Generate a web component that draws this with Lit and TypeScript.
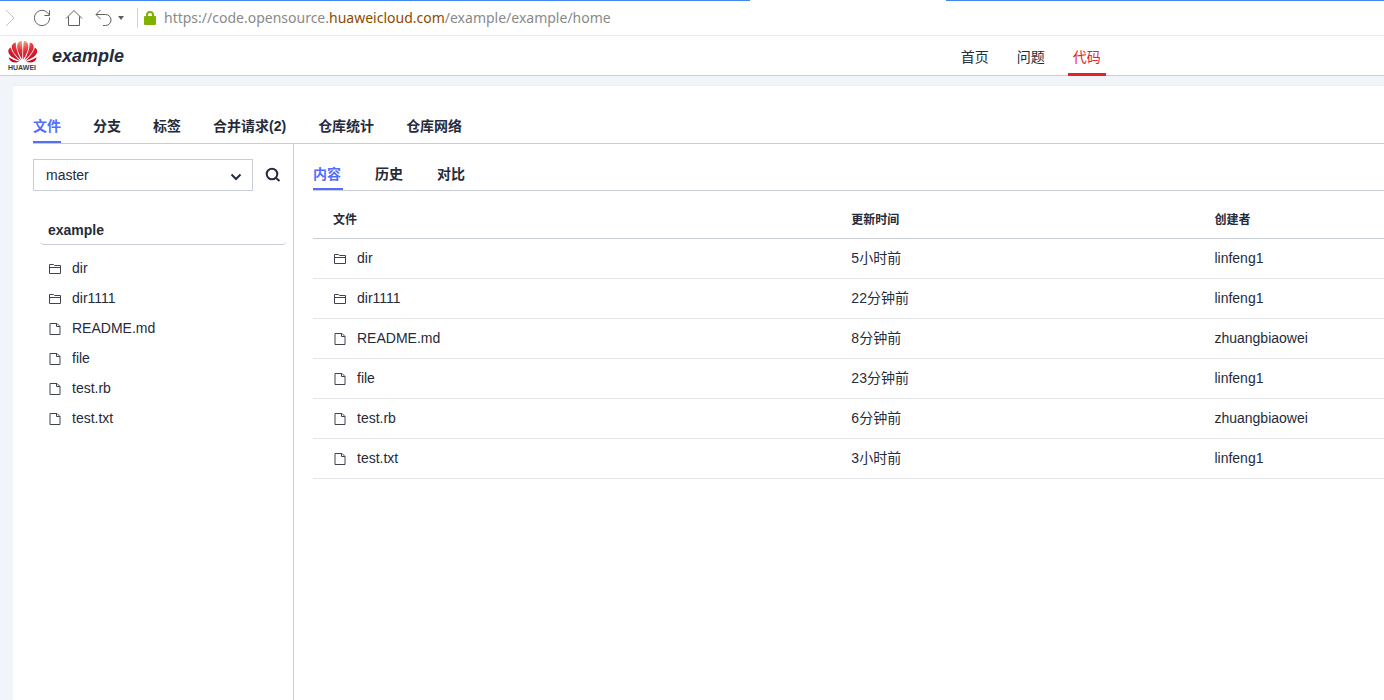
import { LitElement, html, css, svg } from "lit";
import { customElement, state } from "lit/decorators.js";

type Kind = "dir" | "file";
interface Entry {
  name: string;
  kind: Kind;
  updated: string;
  author: string;
}

const ENTRIES: Entry[] = [
  { name: "dir", kind: "dir", updated: "5小时前", author: "linfeng1" },
  { name: "dir1111", kind: "dir", updated: "22分钟前", author: "linfeng1" },
  { name: "README.md", kind: "file", updated: "8分钟前", author: "zhuangbiaowei" },
  { name: "file", kind: "file", updated: "23分钟前", author: "linfeng1" },
  { name: "test.rb", kind: "file", updated: "6分钟前", author: "zhuangbiaowei" },
  { name: "test.txt", kind: "file", updated: "3小时前", author: "linfeng1" },
];

const entryIcon = (kind: Kind) =>
  kind === "dir"
    ? html`<svg class="glyph" width="14" height="14" viewBox="0 0 14 14" aria-hidden="true">
        <path d="M1.5 12.5V3.5H5.5L6.5 4.5H12.5V12.5ZM1.5 6.5H12.5" />
      </svg>`
    : html`<svg class="glyph" width="14" height="14" viewBox="0 0 14 14" aria-hidden="true">
        <path d="M2 2.5H9L12 5.5V13.5H2ZM8.5 2.5V5.5H12" />
      </svg>`;

@customElement("browser-bar")
export class BrowserBar extends LitElement {
  static styles = css`
    :host {
      display: block;
      border-bottom: 1px solid #ebebeb;
      background: #fff;
    }
    .edge {
      display: grid;
      grid-template-columns: 750fr 196fr 438fr;
      height: 1px;
    }
    .line {
      background: #4285f4;
    }
    .bar {
      display: flex;
      align-items: center;
      height: 34px;
    }
    button {
      display: flex;
      align-items: center;
      justify-content: center;
      width: 32px;
      height: 32px;
      padding: 0;
      border: 0;
      background: none;
    }
    .forward {
      width: 26px;
      justify-content: flex-start;
    }
    .back {
      width: 26px;
    }
    .menu {
      width: 10px;
    }
    svg {
      fill: none;
      stroke: #5f5f5f;
    }
    .pale {
      stroke: #c4c4c4;
    }
    .solid {
      fill: #5f5f5f;
      stroke: none;
    }
    .sep {
      width: 1px;
      height: 20px;
      margin: 0 6px 0 11px;
      background: #d2d2d2;
    }
    .lock {
      fill: #80b100;
      stroke: none;
    }
    .url {
      margin-left: 8px;
      color: #8a8a8a;
      font: 14px/20px "Noto Sans", "Open Sans", sans-serif;
      white-space: nowrap;
    }
    .domain {
      color: #8c4a00;
    }
  `;

  render() {
    return html`
      <div class="edge"><span class="line"></span><span></span><span class="line"></span></div>
      <div class="bar">
        <button class="forward" aria-label="前进">
          <svg class="pale" width="16" height="18" viewBox="0 0 16 18"><path d="M6 1L14 9L6 17" /></svg>
        </button>
        <button aria-label="刷新">
          <svg width="18" height="18" viewBox="0 0 18 18"><path d="M16.6 8.5A7.6 7.6 0 1 1 14.6 3.8L16.5 6M16.5 1.5V6.5H11.5" /></svg>
        </button>
        <button aria-label="主页">
          <svg width="18" height="18" viewBox="0 0 18 18"><path d="M1 9.5L9 1.5L17 9.5M3.5 7.5V16.5H14.5V7.5" /></svg>
        </button>
        <button class="back" aria-label="后退">
          <svg width="18" height="18" viewBox="0 0 18 18"><path d="M6.5 1L2 5.5L6.5 10M2 5.5H11.5A5 5 0 0 1 11.5 16.5H9" /></svg>
        </button>
        <button class="menu" aria-label="更多">
          <svg class="solid" width="6" height="4" viewBox="0 0 6 4"><path d="M0 0H6L3 4Z" /></svg>
        </button>
        <span class="sep"></span>
        <svg class="lock" width="12" height="14" viewBox="0 0 12 14">
          <path fill-rule="evenodd" d="M1 5H2V4A4 4 0 0 1 10 4V5H11A1 1 0 0 1 12 6V13A1 1 0 0 1 11 14H1A1 1 0 0 1 0 13V6A1 1 0 0 1 1 5ZM4 5H8V4A2 2 0 0 0 4 4Z" />
        </svg>
        <span class="url">https://code.opensource.<span class="domain">huaweicloud.com</span>/example/example/home</span>
      </div>
    `;
  }
}

@customElement("site-header")
export class SiteHeader extends LitElement {
  static styles = css`
    :host {
      display: flex;
      justify-content: space-between;
      height: 39px;
      padding: 0 20.1% 0 8px;
      border-bottom: 1px solid #c9ced6;
      background: #fff;
    }
    .brand {
      display: flex;
      align-items: center;
      gap: 14px;
      color: #252b3a;
      text-decoration: none;
    }
    .mark {
      font: bold 7px "Liberation Sans", sans-serif;
      fill: #443a3c;
    }
    .name {
      font: italic bold 18px/24px "Liberation Sans", Arial, sans-serif;
    }
    nav {
      display: flex;
      gap: 18px;
    }
    .link {
      height: 37px;
      padding: 0 5px;
      border-bottom: 3px solid transparent;
      color: #252b3a;
      font: 14px/42px "Liberation Sans", "Noto Sans CJK SC", sans-serif;
      text-decoration: none;
    }
    .current {
      color: #e71f2e;
      border-color: #e71f2e;
    }
  `;

  render() {
    const petals = [
      "M14.2 19.5C11 14.5 8.8 9 9.2 5.5C9.5 2.4 11.5 1.2 13.600 1C14.400 6 14.600 13 14.2 19.5Z",
      "M13 20.2C7.5 15.5 3.8 10.5 3.8 7C3.8 4.5 5.5 3 7.8 2.6C7.8 9 10 14 13 20.2Z",
      "M12 20.9C6 18.8 .5 15.5 .3 11.5C.2 9.8 1.2 8.3 2.5 7.6C4 12.5 8 17 12 20.9Z",
      "M11.5 21.7C8 22.7 4.5 22.9 2.8 21.1C1.8 20 1.2 19 .9 17.2C4 19.2 8 20.9 11.5 21.7Z",
    ];
    const half = () => petals.map((d) => svg`<path d=${d} />`);
    return html`
      <a class="brand" href="#">
        <svg width="30" height="31" viewBox="0 0 30 31" role="img" aria-label="HUAWEI">
          <defs>
            <radialGradient id="petal" gradientUnits="userSpaceOnUse" cx="13" cy="2" r="22">
              <stop offset="0" stop-color="#f09a80" />
              <stop offset=".4" stop-color="#e0303a" />
              <stop offset="1" stop-color="#c40018" />
            </radialGradient>
          </defs>
          <g fill="url(#petal)">${half()}</g>
          <g fill="url(#petal)" transform="matrix(-1 0 0 1 29.5 0)">${half()}</g>
          <text class="mark" x="0" y="30">HUAWEI</text>
        </svg>
        <span class="name">example</span>
      </a>
      <nav>
        <a class="link" href="#home">首页</a>
        <a class="link" href="#issues">问题</a>
        <a class="link current" href="#code">代码</a>
      </nav>
    `;
  }
}

@customElement("file-tree")
export class FileTree extends LitElement {
  static styles = css`
    :host {
      display: block;
      color: #252b3a;
      font: 14px/30px "Liberation Sans", "Noto Sans CJK SC", sans-serif;
    }
    .picker {
      display: flex;
      align-items: center;
      gap: 12px;
      padding: 15px 12px 0 0;
    }
    .field {
      display: grid;
      flex: 1;
      align-items: center;
    }
    select,
    .caret {
      grid-area: 1 / 1;
    }
    select {
      width: 100%;
      height: 32px;
      padding: 0 12px;
      border: 1px solid #c9cdd8;
      border-radius: 0;
      appearance: none;
      background: #fff;
      color: inherit;
      font: inherit;
    }
    .caret {
      justify-self: end;
      margin: 4px 11px 0 0;
      pointer-events: none;
    }
    .stroke {
      fill: none;
      stroke: #252b3a;
      stroke-width: 2;
    }
    button {
      display: flex;
      padding: 0;
      border: 0;
      background: none;
    }
    h2 {
      margin: 24px 7px 8px;
      padding: 2px 8px 0;
      border-bottom: 1px solid #c9cdd8;
      border-radius: 4px;
      font-size: 14px;
      line-height: 27px;
    }
    ul {
      margin: 0;
      padding: 0 15px;
      list-style: none;
    }
    a {
      display: flex;
      align-items: center;
      gap: 10px;
      color: inherit;
      text-decoration: none;
    }
    .glyph {
      fill: none;
      stroke: #404452;
    }
  `;

  render() {
    return html`
      <div class="picker">
        <div class="field">
          <select aria-label="分支"><option>master</option></select>
          <svg class="caret stroke" width="12" height="8" viewBox="0 0 12 8"><path d="M1.5 1.5L6 6L10.5 1.5" /></svg>
        </div>
        <button aria-label="搜索">
          <svg class="stroke" width="16" height="16" viewBox="0 0 16 16"><circle cx="7" cy="7" r="5.3" /><path d="M10.8 10.8L14.5 14" /></svg>
        </button>
      </div>
      <h2>example</h2>
      <ul>
        ${ENTRIES.map((e) => html`<li><a href="#${e.name}">${entryIcon(e.kind)}<span>${e.name}</span></a></li>`)}
      </ul>
    `;
  }
}

@customElement("file-table")
export class FileTable extends LitElement {
  static styles = css`
    :host {
      display: block;
      color: #252b3a;
      font: 14px/20px "Liberation Sans", "Noto Sans CJK SC", sans-serif;
    }
    table {
      width: 100%;
      border-spacing: 0;
      table-layout: fixed;
    }
    .wide {
      width: 48.4%;
    }
    .mid {
      width: 33.9%;
    }
    th {
      height: 48px;
      padding: 10px 0 0 20px;
      border-bottom: 1px solid #c9cdd8;
      box-sizing: border-box;
      font-size: 12px;
      text-align: left;
    }
    td {
      height: 38px;
      padding: 0 0 1px 20px;
      border-bottom: 1px solid #e3e5e9;
      white-space: nowrap;
    }
    a {
      display: flex;
      align-items: center;
      gap: 10px;
      color: inherit;
      text-decoration: none;
    }
    .glyph {
      fill: none;
      stroke: #404452;
    }
  `;

  render() {
    return html`
      <table>
        <thead>
          <tr><th class="wide">文件</th><th class="mid">更新时间</th><th>创建者</th></tr>
        </thead>
        <tbody>
          ${ENTRIES.map(
            (e) => html`<tr>
              <td><a href="#${e.name}">${entryIcon(e.kind)}<span>${e.name}</span></a></td>
              <td>${e.updated}</td>
              <td>${e.author}</td>
            </tr>`
          )}
        </tbody>
      </table>
    `;
  }
}

@customElement("app-root")
export class AppRoot extends LitElement {
  static styles = css`
    :host {
      display: flex;
      flex-direction: column;
      min-height: 100vh;
      background: #f1f4f8;
      font: 14px/20px "Liberation Sans", "Noto Sans CJK SC", sans-serif;
    }
    .panel {
      display: flex;
      flex: 1;
      flex-direction: column;
      margin: 9px 0 0 13px;
      padding-left: 20px;
      border-top: 1px solid #ebedf0;
      background: #fff;
    }
    .tabs {
      display: flex;
      gap: 32px;
      border-bottom: 1px solid #c9cdd8;
    }
    .main-tabs {
      padding-top: 26px;
    }
    .inner-tabs {
      padding-top: 17px;
    }
    .tab {
      padding: 0;
      border: 0;
      border-bottom: 2px solid transparent;
      background: none;
      color: #252b3a;
      font: bold 14px/29px "Liberation Sans", "Noto Sans CJK SC", sans-serif;
    }
    .inner-tabs .tab {
      padding-right: 2px;
      line-height: 27px;
    }
    .tab.on {
      border-color: #526eff;
      color: #526eff;
    }
    .columns {
      display: grid;
      flex: 1;
      grid-template-columns: 261px 1fr;
    }
    file-tree {
      border-right: 1px solid #c9cdd8;
    }
    .content {
      padding-left: 19px;
    }
  `;

  @state() section = "文件";
  @state() view = "内容";

  render() {
    return html`
      <browser-bar></browser-bar>
      <site-header></site-header>
      <main class="panel">
        <div class="tabs main-tabs">
          ${["文件", "分支", "标签", "合并请求(2)", "仓库统计", "仓库网络"].map(
            (t) => html`<button class="tab ${t === this.section ? "on" : ""}" @click=${() => (this.section = t)}>${t}</button>`
          )}
        </div>
        <div class="columns">
          <file-tree></file-tree>
          <div class="content">
            <div class="tabs inner-tabs">
              ${["内容", "历史", "对比"].map(
                (t) => html`<button class="tab ${t === this.view ? "on" : ""}" @click=${() => (this.view = t)}>${t}</button>`
              )}
            </div>
            <file-table></file-table>
          </div>
        </div>
      </main>
    `;
  }
}
